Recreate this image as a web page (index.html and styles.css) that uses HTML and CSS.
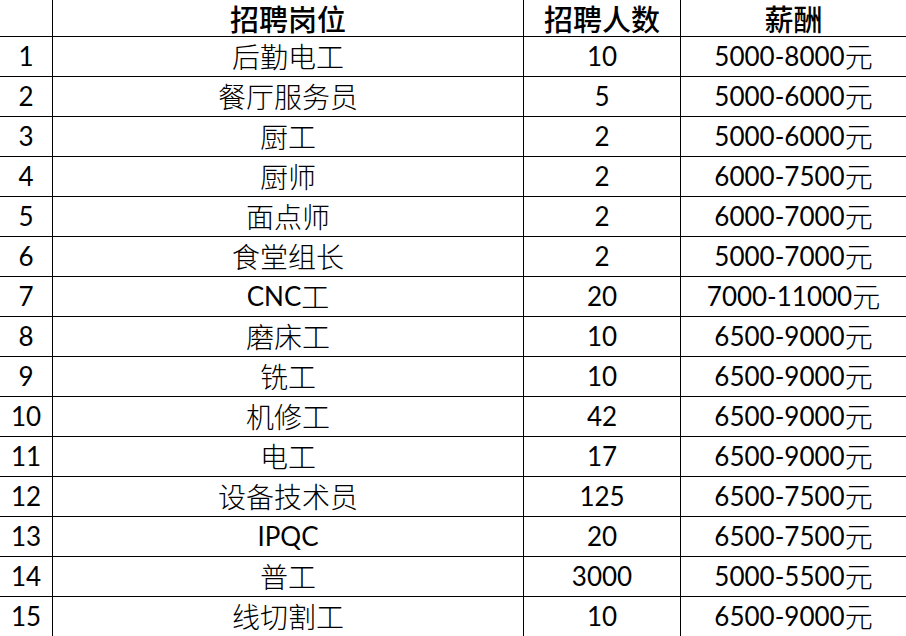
FILE: index.html
```html
<!DOCTYPE html>
<html lang="zh-CN">
<head>
<meta charset="utf-8">
<title>招聘</title>
<link rel="stylesheet" href="styles.css">
</head>
<body>
<div class="sheet">
  <div class="c h"></div><div class="c h">招聘岗位</div><div class="c h">招聘人数</div><div class="c h last">薪酬</div>
  <div class="c">1</div><div class="c"><span class="zh">后勤电工</span></div><div class="c">10</div><div class="c last">5000-8000<span class="zh">元</span></div>
  <div class="c">2</div><div class="c"><span class="zh">餐厅服务员</span></div><div class="c">5</div><div class="c last">5000-6000<span class="zh">元</span></div>
  <div class="c">3</div><div class="c"><span class="zh">厨工</span></div><div class="c">2</div><div class="c last">5000-6000<span class="zh">元</span></div>
  <div class="c">4</div><div class="c"><span class="zh">厨师</span></div><div class="c">2</div><div class="c last">6000-7500<span class="zh">元</span></div>
  <div class="c">5</div><div class="c"><span class="zh">面点师</span></div><div class="c">2</div><div class="c last">6000-7000<span class="zh">元</span></div>
  <div class="c">6</div><div class="c"><span class="zh">食堂组长</span></div><div class="c">2</div><div class="c last">5000-7000<span class="zh">元</span></div>
  <div class="c">7</div><div class="c">CNC<span class="zh">工</span></div><div class="c">20</div><div class="c last">7000-11000<span class="zh">元</span></div>
  <div class="c">8</div><div class="c"><span class="zh">磨床工</span></div><div class="c">10</div><div class="c last">6500-9000<span class="zh">元</span></div>
  <div class="c">9</div><div class="c"><span class="zh">铣工</span></div><div class="c">10</div><div class="c last">6500-9000<span class="zh">元</span></div>
  <div class="c">10</div><div class="c"><span class="zh">机修工</span></div><div class="c">42</div><div class="c last">6500-9000<span class="zh">元</span></div>
  <div class="c">11</div><div class="c"><span class="zh">电工</span></div><div class="c">17</div><div class="c last">6500-9000<span class="zh">元</span></div>
  <div class="c">12</div><div class="c"><span class="zh">设备技术员</span></div><div class="c">125</div><div class="c last">6500-7500<span class="zh">元</span></div>
  <div class="c">13</div><div class="c">IPQC</div><div class="c">20</div><div class="c last">6500-7500<span class="zh">元</span></div>
  <div class="c">14</div><div class="c"><span class="zh">普工</span></div><div class="c">3000</div><div class="c last">5000-5500<span class="zh">元</span></div>
  <div class="c">15</div><div class="c"><span class="zh">线切割工</span></div><div class="c">10</div><div class="c last">6500-9000<span class="zh">元</span></div>
</div>
</body>
</html>
```

FILE: styles.css
```css
html, body {
  margin: 0;
  padding: 0;
  background: #ffffff;
  overflow: hidden;
}
.sheet {
  display: grid;
  grid-template-columns: 53px 471px 157px 225px;
  grid-template-rows: 37px;
  grid-auto-rows: 40px;
  width: 906px;
  font-family: "Lato", "Noto Sans CJK SC", sans-serif;
  font-size: 26px;
  color: #000;
}
.c {
  display: flex;
  align-items: center;
  justify-content: center;
  border-right: 1px solid #000;
  border-bottom: 1px solid #000;
  white-space: nowrap;
  line-height: 1.2;
}
.c.last { border-right: none; }
.zh {
  font-family: "Noto Sans CJK SC", sans-serif;
  font-size: 28px;
  font-weight: 300;
  line-height: 1.2;
}
.h {
  font-family: "Noto Sans CJK SC", sans-serif;
  font-weight: 500;
  font-size: 29px;
  line-height: 1.2;
}
```
